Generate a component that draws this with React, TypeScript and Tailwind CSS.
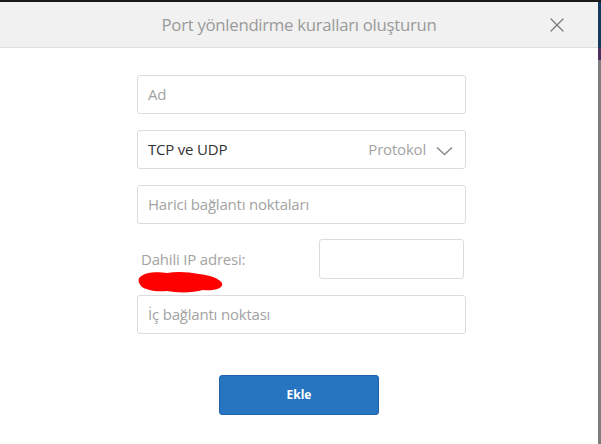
import { X } from 'lucide-react';

const font = { fontFamily: '"Open Sans", "Noto Sans", sans-serif' };

function Field({ placeholder }: { placeholder: string }) {
  return (
    <div className="flex h-[39px] w-[329px] items-center rounded-[3px] border border-[#dcdcdc] px-[10px] text-[15px] tracking-[-0.2px] text-[#a3a3a3]">
      {placeholder}
    </div>
  );
}

export default function App() {
  return (
    <div className="flex h-[444px] w-[601px] bg-[#1b1b1b] pt-[2px]" style={font}>
      <div className="flex w-[598px] flex-col bg-white">
        {/* Header */}
        <div className="relative flex h-[46px] items-center justify-center border-b border-[#dedede] bg-[#f1f1f1]">
          <span className="text-[16.8px] tracking-[-0.3px] text-[#9a9a9a]">Port yönlendirme kuralları oluşturun</span>
          <X className="absolute right-[29px] top-[11px] h-[24px] w-[24px] text-[#7a7a7a]" strokeWidth={1.3} />
        </div>

        <div className="flex flex-col items-start pl-[137px] pt-[27px]">
          <Field placeholder="Ad" />

          <div className="mt-[16px] flex h-[39px] w-[329px] items-center justify-between rounded-[3px] border border-[#dcdcdc] pl-[10px] pr-[12px] text-[15px] tracking-[-0.2px]">
            <span className="text-[#333]">TCP ve UDP</span>
            <span className="flex items-center gap-[10px] text-[#a3a3a3]">
              Protokol
              <svg width="17" height="10" viewBox="0 0 17 10" className="mt-[2px]">
                <polyline points="1,1.5 8.5,8.5 16,1.5" fill="none" stroke="#8c8c8c" strokeWidth="1.6" />
              </svg>
            </span>
          </div>

          <div className="mt-[16px]">
            <Field placeholder="Harici bağlantı noktaları" />
          </div>

          <div className="mt-[16px] flex h-[50px] w-[329px] items-start justify-between">
            <div className="flex flex-col pl-[4px] pt-[8px]">
              <span className="text-[15px] tracking-[-0.2px] text-[#a3a3a3]">Dahili IP adresi:</span>
              <svg width="88" height="24" viewBox="0 0 88 24" className="-ml-[4px] -mt-[1px]">
                <path
                  d="M3 7 C10 1, 22 2, 30 3 C40 1, 52 2, 62 4 C72 5, 82 8, 85 13 C87 19, 76 21, 66 20 C56 23, 40 23, 30 21 C18 22, 8 20, 4 16 C1 12, 1 9, 3 7 Z"
                  fill="#ff0000"
                />
              </svg>
            </div>
            <div className="-mt-[1px] mr-[2px] h-[40px] w-[145px] rounded-[3px] border border-[#dcdcdc]" />
          </div>

          <div className="mt-[5px]">
            <Field placeholder="İç bağlantı noktası" />
          </div>

          <button className="ml-[82px] mt-[41px] flex h-[40px] w-[160px] items-center justify-center rounded-[3px] border border-[#1f62a8] bg-[#2775c1] text-[12px] font-bold text-white">
            Ekle
          </button>
        </div>
      </div>
      <div className="flex w-[3px] flex-col">
        <div className="h-[46px] bg-[#143a62]" />
        <div className="h-[12px] bg-[#4b2f5c]" />
        <div className="flex-1 bg-[#7d7d7d]" />
      </div>
    </div>
  );
}
